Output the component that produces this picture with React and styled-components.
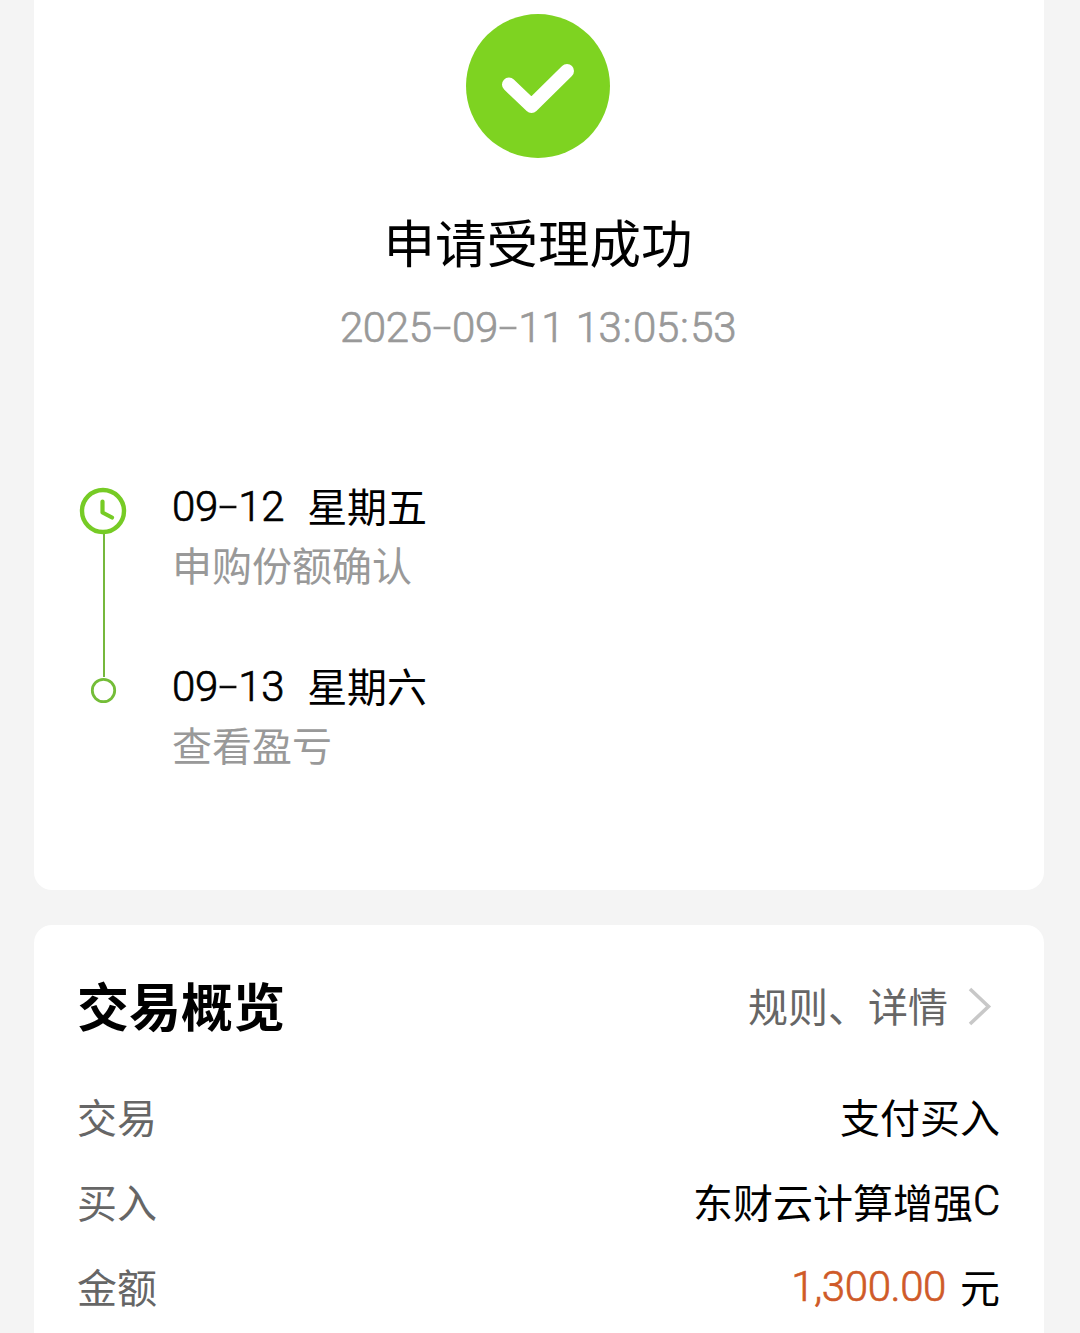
import React from 'react';
import styled, { createGlobalStyle } from 'styled-components'

const GlobalStyle = createGlobalStyle`
  * {
    box-sizing: border-box;
  }
  body {
    margin: 0;
    background: #f4f4f4;
    font-family: "Noto Sans CJK SC", sans-serif;
    color: #000;
  }
`;

const Page = styled.div`
  display: flex;
  flex-direction: column;
  gap: 35px;
  height: 1333px;
  padding: 0 36px 0 34px;
  overflow: hidden;
`;

const Card = styled.section`
  flex: none;
  background: #fff;
  border-radius: ${props => props.$first ? '0 0 18px 18px' : '18px 18px 0 0'};
  height: ${props => props.$first ? '890px' : '408px'};
  padding: ${props => props.$first ? '14px 44px 0' : '48px 44px 0'};
`;

const Result = styled.div`
  display: flex;
  flex-direction: column;
  align-items: center;
  padding-right: 2px;
`;

const Title = styled.h1`
  margin: 51px 0 0;
  font-size: 51.5px;
  line-height: 64px;
  font-weight: 400;
`;

const Time = styled.div`
  margin-top: 27px;
  font-size: 42px;
  line-height: 48px;
  color: #999;
`;

const Number = styled.span`
  font-family: Roboto, sans-serif;
  font-size: 42px;
  font-weight: 300;
  letter-spacing: -0.4px;
  white-space: pre;
  -webkit-text-stroke: 0.7px currentColor;
`;

// separators get a fixed width so the figures stay on an even pitch
const Separator = styled.span`
  display: inline-block;
  width: ${props => props.$wide ? 20.5 : 11.5}px;
  text-align: center;
  letter-spacing: 0;
  transform: ${props => props.$wide ? 'translateY(-1px) scale(1.6, 0.9)' : 'none'};
`;

const Steps = styled.ol`
  display: flex;
  flex-direction: column;
  list-style: none;
  margin: 132px 0 0;
  padding: 0;
`;

const Step = styled.li`
  display: flex;
  height: 180px;
`;

const Rail = styled.div`
  display: flex;
  flex-direction: column;
  align-items: center;
  width: 50px;
  padding-top: ${props => props.$last ? '12px' : '2px'};
`;

const Line = styled.div`
  flex: 1;
  width: 2px;
  margin: -2px 0 -13px 1px;
  background: #76b83c;
`;

const StepText = styled.div`
  margin-left: 44px;
`;

const StepDate = styled.div`
  display: flex;
  align-items: center;
  gap: 23px;
  height: 42px;
  font-size: 40px;
  line-height: 42px;

  ${Number} {
    padding-top: 3px;
  }
`;

const StepNote = styled.div`
  margin-top: 14px;
  font-size: 40px;
  line-height: 48px;
  color: #999;
`;

const Header = styled.div`
  display: flex;
  justify-content: space-between;
  align-items: center;
  height: 64px;
  margin-bottom: 36px;
`;

const Heading = styled.h2`
  margin: 0 0 0 -1px;
  font-size: 52px;
  line-height: 64px;
  font-weight: 700;
`;

const More = styled.a`
  display: flex;
  align-items: center;
  gap: 20px;
  margin-right: 8px;
  font-size: 40px;
  line-height: 48px;
  color: #666;

  svg {
    margin-top: 1px;
  }
`;

const Row = styled.div`
  display: flex;
  justify-content: space-between;
  align-items: center;
  height: 85px;
  font-size: 40px;
  line-height: 48px;
`;

const Label = styled.span`
  margin-left: -1px;
  color: #666;
`;

const Value = styled.span`
  display: flex;
  align-items: center;
  gap: ${props => props.$gap || '0'};
`;

const Amount = styled.span`
  color: #cf5a28;
`;

function Figures({ text }) {
  return (
    <Number>
      {text.split('').map((char, i) => (
        /[-: ]/.test(char)
          ? <Separator key={i} $wide={char === '-'}>{char}</Separator>
          : char
      ))}
    </Number>
  );
}

function SuccessIcon() {
  return (
    <svg width="144" height="144" viewBox="0 0 144 144" fill="none">
      <circle cx="72" cy="72" r="72" fill="#7ed321" />
      <path d="M43 70.5L65.5 92L101 57" stroke="#fff" strokeWidth="14" strokeLinecap="round" strokeLinejoin="round" />
    </svg>
  );
}

function ClockIcon() {
  return (
    <svg width="50" height="50" viewBox="0 0 50 50" fill="none">
      <circle cx="25" cy="25" r="21" stroke="#76cb25" strokeWidth="4.4" />
      <path d="M24.5 15.5V26.5L34 31.5" stroke="#76cb25" strokeWidth="4.2" strokeLinecap="round" strokeLinejoin="round" />
    </svg>
  );
}

function DotIcon() {
  return (
    <svg width="28" height="28" viewBox="0 0 28 28" fill="none">
      <circle cx="14.5" cy="14.5" r="11.2" fill="#fff" stroke="#74bd38" strokeWidth="2.8" />
    </svg>
  );
}

function Arrow() {
  return (
    <svg width="24" height="40" viewBox="0 0 24 40" fill="none">
      <path d="M2 3L20.5 20.5L2 38" stroke="#c8c8c8" strokeWidth="3.6" />
    </svg>
  );
}

function App() {
  return (
    <Page>
      <GlobalStyle />
      <Card $first>
        <Result>
          <SuccessIcon />
          <Title>申请受理成功</Title>
          <Time><Figures text="2025-09-11 13:05:53" /></Time>
        </Result>
        <Steps>
          <Step>
            <Rail>
              <ClockIcon />
              <Line />
            </Rail>
            <StepText>
              <StepDate><Figures text="09-12" />星期五</StepDate>
              <StepNote>申购份额确认</StepNote>
            </StepText>
          </Step>
          <Step>
            <Rail $last>
              <DotIcon />
            </Rail>
            <StepText>
              <StepDate><Figures text="09-13" />星期六</StepDate>
              <StepNote>查看盈亏</StepNote>
            </StepText>
          </Step>
        </Steps>
      </Card>
      <Card>
        <Header>
          <Heading>交易概览</Heading>
          <More>规则、详情<Arrow /></More>
        </Header>
        <Row>
          <Label>交易</Label>
          <Value>支付买入</Value>
        </Row>
        <Row>
          <Label>买入</Label>
          <Value>东财云计算增强<Figures text="C" /></Value>
        </Row>
        <Row>
          <Label>金额</Label>
          <Value $gap="14px">
            <Amount><Figures text="1,300.00" /></Amount>
            元
          </Value>
        </Row>
      </Card>
    </Page>
  );
}

export default App;
